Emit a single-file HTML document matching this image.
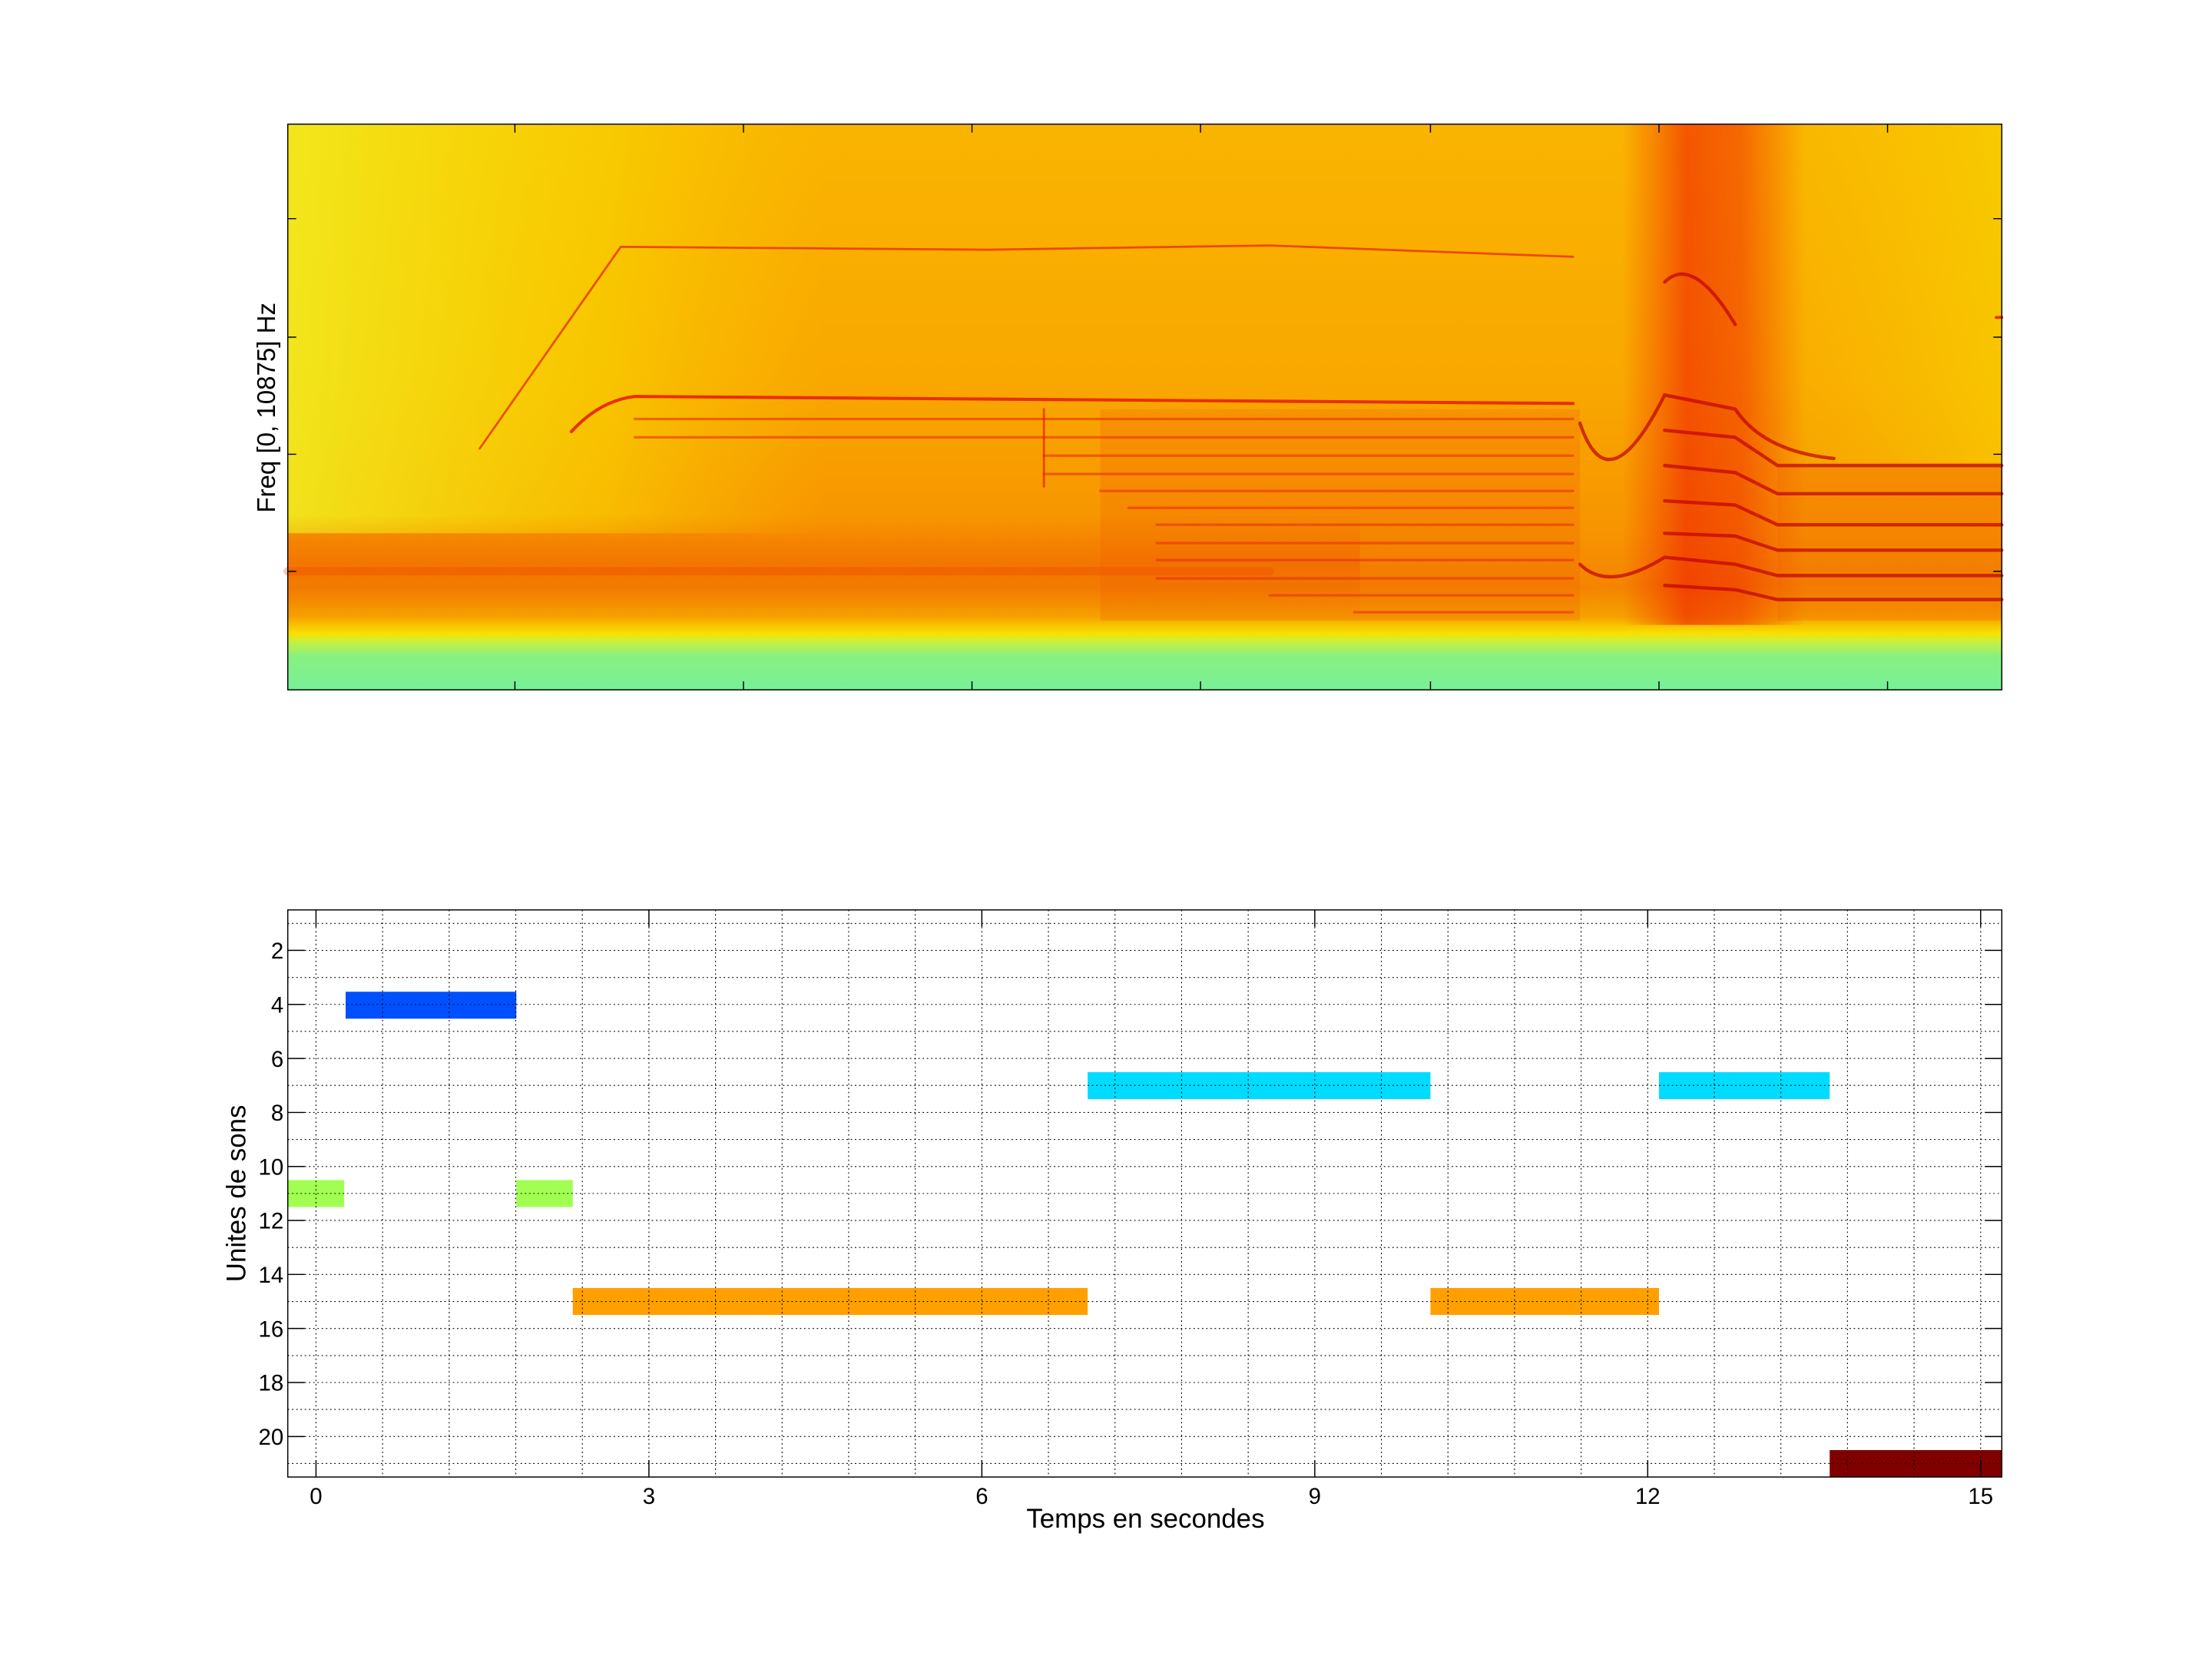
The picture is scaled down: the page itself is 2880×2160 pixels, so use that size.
<!DOCTYPE html>
<html><head><meta charset="utf-8"><style>html,body{margin:0;padding:0;background:#fff}svg{display:block}</style></head><body>
<svg width="2880" height="2160" viewBox="0 0 1568 1176" xmlns="http://www.w3.org/2000/svg" font-family="Liberation Sans, sans-serif">
<defs>
<linearGradient id="bg" x1="0" y1="0" x2="0" y2="1">
<stop offset="0" stop-color="#f9b400"/>
<stop offset="0.45" stop-color="#f9a800"/>
<stop offset="0.72" stop-color="#f79400"/>
<stop offset="0.82" stop-color="#f48400"/>
<stop offset="0.87" stop-color="#f6a000"/>
<stop offset="0.90" stop-color="#f8e000"/>
<stop offset="0.915" stop-color="#c8f040"/>
<stop offset="0.94" stop-color="#88f080"/>
<stop offset="1" stop-color="#78f098"/>
</linearGradient>
<linearGradient id="ly" x1="0" y1="0" x2="1" y2="0">
<stop offset="0" stop-color="#f0f020" stop-opacity="0.85"/>
<stop offset="0.6" stop-color="#f8e000" stop-opacity="0.5"/>
<stop offset="1" stop-color="#f8d000" stop-opacity="0"/>
</linearGradient>
<linearGradient id="ry" x1="0" y1="0" x2="1" y2="0">
<stop offset="0" stop-color="#f8d000" stop-opacity="0"/>
<stop offset="1" stop-color="#f8d800" stop-opacity="0.6"/>
</linearGradient>
<linearGradient id="rz" x1="0" y1="0" x2="1" y2="0">
<stop offset="0" stop-color="#f02000" stop-opacity="0"/>
<stop offset="0.35" stop-color="#f01800" stop-opacity="0.6"/>
<stop offset="0.65" stop-color="#f02000" stop-opacity="0.5"/>
<stop offset="1" stop-color="#f02000" stop-opacity="0"/>
</linearGradient>
<linearGradient id="bz" x1="0" y1="0" x2="0" y2="1">
<stop offset="0" stop-color="#f06000" stop-opacity="0"/>
<stop offset="0.5" stop-color="#f06000" stop-opacity="0.5"/>
<stop offset="1" stop-color="#f06000" stop-opacity="0"/>
</linearGradient>
</defs>
<rect x="204" y="88" width="1215" height="401" fill="url(#bg)"/>
<rect x="204" y="88" width="380" height="290" fill="url(#ly)"/>
<rect x="1240" y="88" width="179" height="240" fill="url(#ry)"/>
<rect x="204" y="365" width="760" height="70" fill="url(#bz)"/>
<rect x="1150" y="88" width="130" height="355" fill="url(#rz)"/>
<rect x="780" y="290" width="340" height="150" fill="#f06000" opacity="0.25"/>
<rect x="1260" y="330" width="159" height="110" fill="#f06000" opacity="0.25"/>
<g fill="none" stroke="#e83000" stroke-linecap="round">
<path d="M340 318 L440 175 L700 177 L900 174 L1115 182" stroke-width="1.5" opacity="0.8"/>
<path d="M405 306 Q425 284 450 281 L1115 286" stroke-width="2.2"/>
<g stroke-width="1.8" opacity="0.6">
<path d="M450 297 H1115"/><path d="M450 310 H1115"/><path d="M740 323 H1115"/><path d="M740 336 H1115"/>
<path d="M780 348 H1115"/><path d="M800 360 H1115"/><path d="M820 372 H1115"/><path d="M820 385 H1115"/>
<path d="M820 397 H1115"/><path d="M820 410 H1115"/><path d="M900 422 H1115"/><path d="M960 434 H1115"/>
</g>
<g stroke="#c00000" stroke-width="2.4" opacity="0.7">
<path d="M1180 200 Q1200 180 1230 230"/><path d="M1120 300 Q1140 360 1180 280 L1230 290 Q1250 320 1300 325"/>
<path d="M1180 305 L1230 310 L1260 330 H1419"/><path d="M1180 330 L1230 335 L1260 350 H1419"/>
<path d="M1180 355 L1230 358 L1260 372 H1419"/><path d="M1180 378 L1230 380 L1260 390 H1419"/>
<path d="M1120 400 Q1140 420 1180 395 L1230 400 L1260 408 H1419"/>
<path d="M1180 415 L1230 418 L1260 425 H1419"/>
</g>
<path d="M1415 225 H1419" stroke-width="2"/>
<path d="M204 405 H900" stroke="#f04000" stroke-width="6" opacity="0.3"/>
<path d="M740 290 V345" stroke="#e02000" stroke-width="1.5" opacity="0.7"/>
</g>
<rect x="204" y="88" width="1215" height="401" fill="none" stroke="#000" stroke-width="0.8"/>
<g stroke="#000" stroke-width="0.8">
<path d="M365 88v6M527 88v6M689 88v6M851 88v6M1014 88v6M1176 88v6M1338 88v6"/>
<path d="M365 489v-6M527 489v-6M689 489v-6M851 489v-6M1014 489v-6M1176 489v-6M1338 489v-6"/>
<path d="M204 155h6M204 239h6M204 322h6M204 405h6M1419 155h-6M1419 239h-6M1419 322h-6M1419 405h-6"/>
</g>
<text transform="translate(195,289) rotate(-90)" text-anchor="middle" font-size="18">Freq [0, 10875] Hz</text>

<rect x="204" y="645" width="1215" height="402" fill="#fff"/>
<rect x="245" y="703" width="121" height="19.1" fill="#0050ff"/>
<rect x="771" y="760" width="243" height="19.1" fill="#00dcff"/>
<rect x="1176" y="760" width="121" height="19.1" fill="#00dcff"/>
<rect x="204" y="836.5" width="40" height="19.1" fill="#a0ff50"/>
<rect x="366" y="836.5" width="40" height="19.1" fill="#a0ff50"/>
<rect x="406" y="913" width="365" height="19.1" fill="#ffa000"/>
<rect x="1014" y="913" width="162" height="19.1" fill="#ffa000"/>
<rect x="1297" y="1027.9" width="122" height="19.1" fill="#800000"/>
<g stroke="#000" stroke-width="0.6" stroke-dasharray="1 2">
<path d="M204 654.6H1419M204 673.7H1419M204 692.9H1419M204 712H1419M204 731.1H1419M204 750.3H1419M204 769.4H1419M204 788.6H1419M204 807.7H1419M204 826.9H1419M204 846H1419M204 865.1H1419M204 884.3H1419M204 903.4H1419M204 922.6H1419M204 941.7H1419M204 960.9H1419M204 980H1419M204 999.1H1419M204 1018.3H1419M204 1037.4H1419"/>
<path d="M224 645V1047M271.2 645V1047M318.4 645V1047M365.6 645V1047M412.8 645V1047M460 645V1047M507.2 645V1047M554.4 645V1047M601.6 645V1047M648.8 645V1047M696 645V1047M743.2 645V1047M790.4 645V1047M837.6 645V1047M884.8 645V1047M932 645V1047M979.2 645V1047M1026.4 645V1047M1073.6 645V1047M1120.8 645V1047M1168 645V1047M1215.2 645V1047M1262.4 645V1047M1309.6 645V1047M1356.8 645V1047M1404 645V1047"/>
</g>
<rect x="204" y="645" width="1215" height="402" fill="none" stroke="#000" stroke-width="0.8"/>
<g stroke="#000" stroke-width="0.8">
<path d="M224 645v12M460 645v12M696 645v12M932 645v12M1168 645v12M1404 645v12"/>
<path d="M224 1047v-12M460 1047v-12M696 1047v-12M932 1047v-12M1168 1047v-12M1404 1047v-12"/>
<path d="M204 673.7h12M204 712h12M204 750.3h12M204 788.6h12M204 826.9h12M204 865.1h12M204 903.4h12M204 941.7h12M204 980h12M204 1018.3h12"/>
<path d="M1419 673.7h-12M1419 712h-12M1419 750.3h-12M1419 788.6h-12M1419 826.9h-12M1419 865.1h-12M1419 903.4h-12M1419 941.7h-12M1419 980h-12M1419 1018.3h-12"/>
</g>
<g font-size="16" text-anchor="end">
<text x="201" y="679.5">2</text><text x="201" y="717.8">4</text><text x="201" y="756.1">6</text><text x="201" y="794.4">8</text>
<text x="201" y="832.7">10</text><text x="201" y="870.9">12</text><text x="201" y="909.2">14</text><text x="201" y="947.5">16</text>
<text x="201" y="985.8">18</text><text x="201" y="1024.1">20</text>
</g>
<g font-size="16" text-anchor="middle">
<text x="224" y="1066">0</text><text x="460" y="1066">3</text><text x="696" y="1066">6</text>
<text x="932" y="1066">9</text><text x="1168" y="1066">12</text><text x="1404" y="1066">15</text>
</g>
<text x="812" y="1083" font-size="19" text-anchor="middle">Temps en secondes</text>
<text transform="translate(174,846) rotate(-90)" font-size="19" text-anchor="middle">Unites de sons</text>
</svg>
</body></html>
